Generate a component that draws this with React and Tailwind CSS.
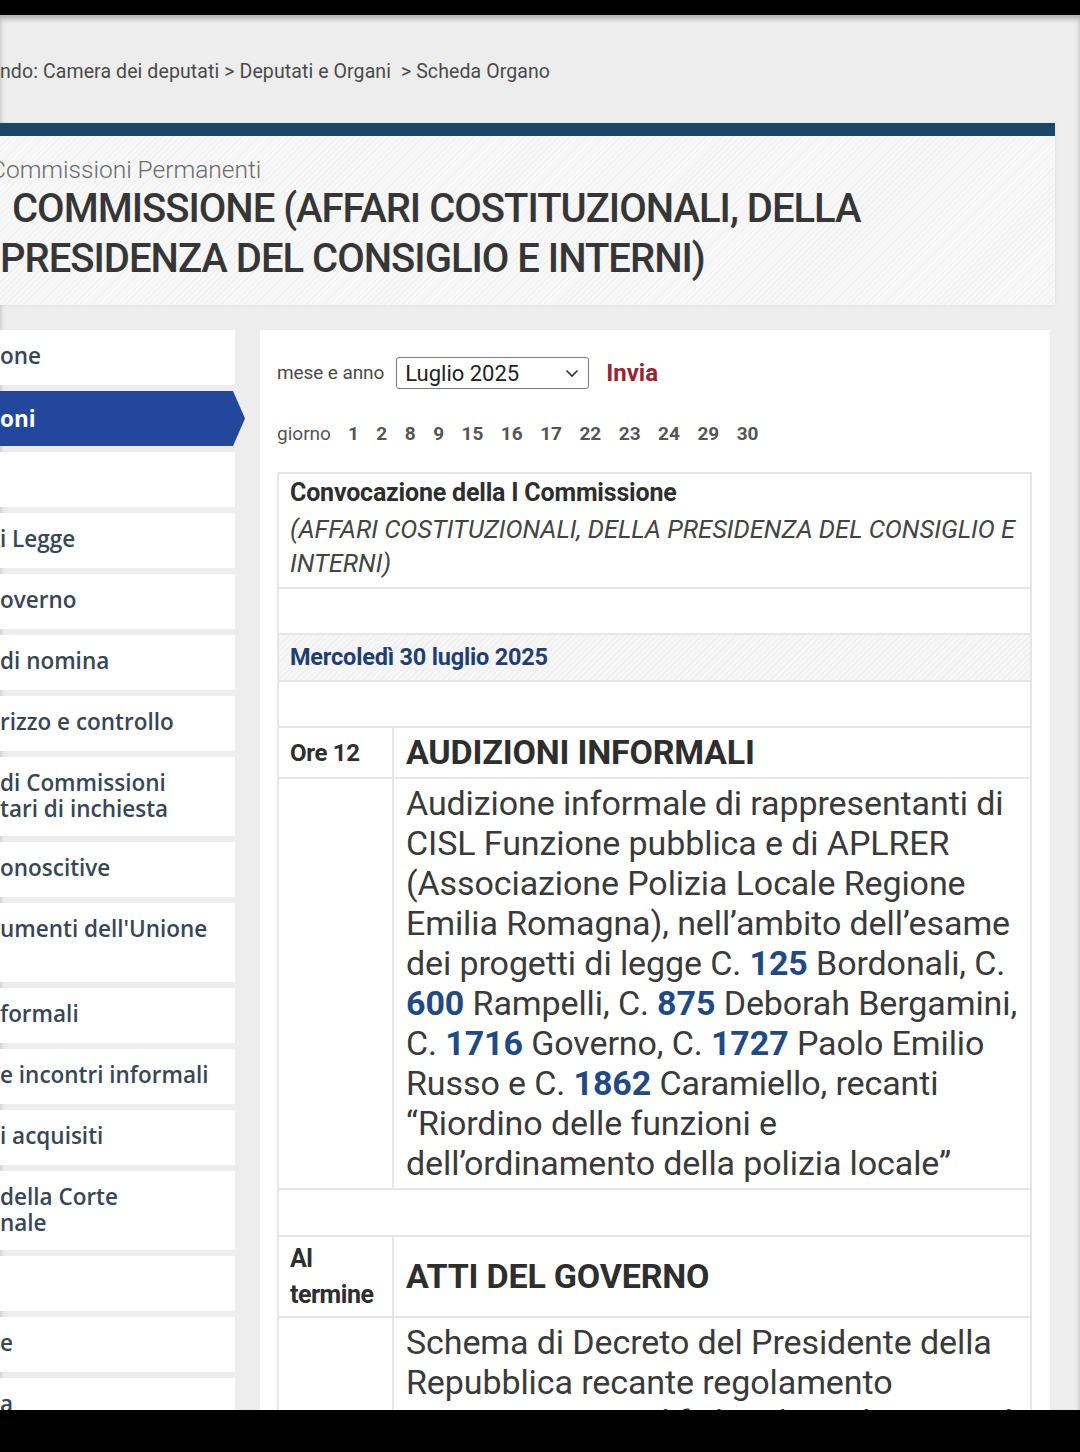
import React from "react";

const navItems = [
  { t: ["one"] },
  { t: ["oni"], active: true },
  { t: [""] },
  { t: ["i Legge"] },
  { t: ["overno"] },
  { t: ["di nomina"] },
  { t: ["rizzo e controllo"] },
  { t: ["di Commissioni", "tari di inchiesta"] },
  { t: ["onoscitive"] },
  { t: ["umenti dell'Unione", ""] },
  { t: ["formali"] },
  { t: ["e incontri informali"] },
  { t: ["i acquisiti"] },
  { t: ["della Corte", "nale"] },
  { t: [""] },
  { t: ["e"] },
  { t: ["a"] },
];

const days = ["1", "2", "8", "9", "15", "16", "17", "22", "23", "24", "29", "30"];

function N({ children }) {
  return <span className="font-bold text-[#1f4a85]">{children}</span>;
}

export default function App() {
  return (
    <div className="w-[1080px] h-[1452px] flex flex-col bg-black overflow-hidden font-['Roboto',sans-serif]">
      <div className="h-[15px] shrink-0 bg-black" />
      <div className="flex-1 overflow-hidden bg-[#ededed] shadow-[inset_0_4px_5px_rgba(0,0,0,0.25)]">
        {/* breadcrumb */}
        <div className="pt-[44px] h-[108px] text-[19.5px] leading-[26px] text-[#4a4a4a] whitespace-nowrap tracking-[0.1px]">
          ndo: Camera dei deputati &gt; Deputati e Organi &nbsp;&gt; Scheda Organo
        </div>

        {/* header */}
        <div className="w-[1055px] shadow-[0_0_3px_rgba(0,0,0,0.08)]">
          <div className="h-[13px] bg-[#1b4766]" />
          <div className="h-[169px] pt-[20px] bg-[repeating-linear-gradient(135deg,#f7f7f7_0px,#f7f7f7_3px,#f1f1f1_3px,#f1f1f1_4px)]">
            <div className="-ml-[10px] text-[24.5px] leading-[28px] font-light text-[#6a6a6a]">
              Commissioni Permanenti
            </div>
            <div className="indent-[12px] text-[40px] leading-[50px] font-medium text-[#363636] tracking-[-1px]">
              COMMISSIONE (AFFARI COSTITUZIONALI, DELLA
              <br />
              PRESIDENZA DEL CONSIGLIO E INTERNI)
            </div>
          </div>
        </div>

        {/* body */}
        <div className="mt-[25px] flex gap-[15px]">
          {/* sidebar */}
          <div className="w-[245px] shrink-0 flex flex-col gap-[6px] font-['Open_Sans',sans-serif]">
            {navItems.map((it, i) =>
              it.active ? (
                <div
                  key={i}
                  className="w-[245px] h-[55px] flex items-center bg-[#22479c] text-white text-[22.5px] font-bold [clip-path:polygon(0_0,calc(100%-12px)_0,100%_50%,calc(100%-12px)_100%,0_100%)]"
                >
                  {it.t[0]}
                </div>
              ) : (
                <div
                  key={i}
                  className={`w-[235px] bg-white py-[13px] text-[22.5px] leading-[26px] font-semibold text-[#384656] whitespace-nowrap ${
                    it.t.length > 1 ? "h-[79px]" : "h-[55px]"
                  }`}
                >
                  {it.t.map((l, j) => (
                    <div key={j}>{l || "\u00a0"}</div>
                  ))}
                </div>
              )
            )}
          </div>

          {/* main panel */}
          <div className="w-[790px] bg-white pl-[17px] pr-[18px] pt-[27px] pb-[40px]">
            <div className="flex items-center h-[32px]">
              <span className="text-[19px] text-[#4a4a4a] tracking-[-0.1px]">mese e anno</span>
              <div className="ml-[12px] w-[193px] h-[32px] border border-[#7a7a7a] rounded-[3px] flex items-center pl-[8px] pr-[8px] text-[22px] text-[#222]">
                <span className="flex-1">Luglio 2025</span>
                <svg width="14" height="9" viewBox="0 0 14 9" className="mr-[1px]">
                  <polyline points="1.5,1.5 7,7 12.5,1.5" fill="none" stroke="#333" strokeWidth="1.6" />
                </svg>
              </div>
              <span className="ml-[17px] text-[24px] font-bold text-[#9b2335]">Invia</span>
            </div>

            <div className="mt-[33px] flex items-center h-[24px] text-[19px] text-[#555]">
              <span className="mr-[17px]">giorno</span>
              <div className="flex gap-[17.5px] font-bold text-[#555]">
                {days.map((d) => (
                  <span key={d}>{d}</span>
                ))}
              </div>
            </div>

            {/* table */}
            <div className="mt-[26px] border-2 border-[#e6e6e6] text-[#333]">
              <div className="pl-[11px] pt-[5px] pb-[7px]">
                <div className="text-[25px] leading-[28px] font-bold text-[#2e2e2e] tracking-[-0.2px]">
                  Convocazione della I Commissione
                </div>
                <div className="mt-[5px] text-[25.5px] leading-[34px] italic text-[#444]">
                  (AFFARI COSTITUZIONALI, DELLA PRESIDENZA DEL CONSIGLIO E
                  <br />
                  INTERNI)
                </div>
              </div>
              <div className="h-[46px] border-t-2 border-[#e6e6e6]" />
              <div className="h-[47px] border-t-2 border-[#e6e6e6] flex items-center pl-[11px] bg-[repeating-linear-gradient(135deg,#f6f6f6_0px,#f6f6f6_3px,#efefef_3px,#efefef_4px)]">
                <span className="text-[23.5px] font-bold text-[#1f3f73] tracking-[-0.2px]">
                  Mercoledì 30 luglio 2025
                </span>
              </div>
              <div className="h-[46px] border-t-2 border-[#e6e6e6]" />

              <div className="flex h-[51px] border-t-2 border-[#e6e6e6]">
                <div className="w-[115px] shrink-0 border-r-2 border-[#e6e6e6] flex items-center pl-[11px] text-[24px] font-bold text-[#2e2e2e] tracking-[-0.3px]">
                  Ore 12
                </div>
                <div className="flex-1 flex items-center pl-[12px] text-[34px] font-bold text-[#2e2e2e] tracking-[-0.2px]">
                  AUDIZIONI INFORMALI
                </div>
              </div>

              <div className="flex border-t-2 border-[#e6e6e6]">
                <div className="w-[115px] shrink-0 border-r-2 border-[#e6e6e6]" />
                <div className="flex-1 pl-[12px] pt-[4px] pb-[5px] text-[34px] leading-[40px] text-[#3a3a3a] whitespace-nowrap tracking-[-0.1px]">
                  Audizione informale di rappresentanti di
                  <br />
                  CISL Funzione pubblica e di APLRER
                  <br />
                  (Associazione Polizia Locale Regione
                  <br />
                  Emilia Romagna), nell’ambito dell’esame
                  <br />
                  dei progetti di legge C. <N>125</N> Bordonali, C.
                  <br />
                  <N>600</N> Rampelli, C. <N>875</N> Deborah Bergamini,
                  <br />
                  C. <N>1716</N> Governo, C. <N>1727</N> Paolo Emilio
                  <br />
                  Russo e C. <N>1862</N> Caramiello, recanti
                  <br />
                  “Riordino delle funzioni e
                  <br />
                  dell’ordinamento della polizia locale”
                </div>
              </div>

              <div className="h-[47px] border-t-2 border-[#e6e6e6]" />

              <div className="flex h-[81px] border-t-2 border-[#e6e6e6]">
                <div className="w-[115px] shrink-0 border-r-2 border-[#e6e6e6] flex flex-col justify-center pl-[11px] text-[25px] leading-[36px] font-bold text-[#2e2e2e] tracking-[-0.5px]">
                  <span>Al</span>
                  <span>termine</span>
                </div>
                <div className="flex-1 flex items-center pl-[12px] text-[34px] font-bold text-[#2e2e2e] tracking-[-0.2px]">
                  ATTI DEL GOVERNO
                </div>
              </div>

              <div className="flex border-t-2 border-[#e6e6e6]">
                <div className="w-[115px] shrink-0 border-r-2 border-[#e6e6e6]" />
                <div className="flex-1 pl-[12px] pt-[4px] pb-[5px] text-[34px] leading-[40px] text-[#3a3a3a] whitespace-nowrap tracking-[-0.1px]">
                  Schema di Decreto del Presidente della
                  <br />
                  Repubblica recante regolamento
                  <br />
                  concernente modifiche al regolamento di
                  <br />
                  cui al decreto del Presidente della
                </div>
              </div>
            </div>
          </div>
        </div>
      </div>
      <div className="h-[42px] shrink-0 bg-black" />
    </div>
  );
}
